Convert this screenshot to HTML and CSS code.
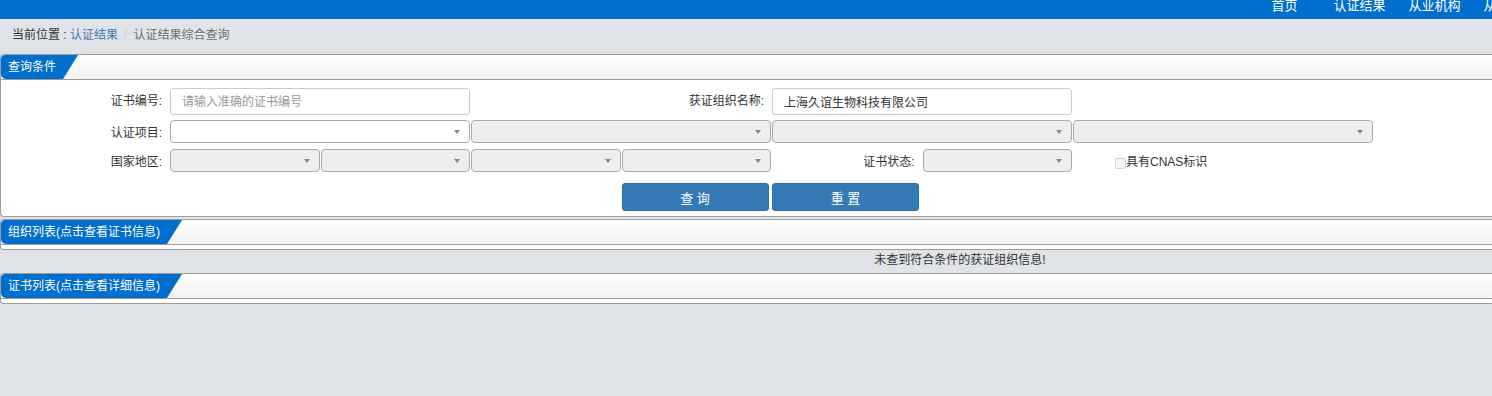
FILE: index.html
```html
<!DOCTYPE html>
<html lang="zh-CN">
<head>
    <meta charset="UTF-8">
    <title>认证结果综合查询</title>
    <link rel="stylesheet" href="styles.css">
</head>
<body>
<div id="page">
    <div id="topbar">
        <ul class="nav">
            <li>首页</li>
            <li>认证结果</li>
            <li>从业机构</li>
            <li>从业人员</li>
        </ul>
    </div>
    <div class="crumb">
        当前位置 : <a class="crumb-link">认证结果</a><span class="sep">/</span><span class="crumb-cur">认证结果综合查询</span>
    </div>

    <!--查询条件-->
    <div class="panel">
        <div class="panel-head"><span class="tab">查询条件</span></div>
        <div class="panel-body query">
            <label class="lbl r1">证书编号:</label>
            <div class="c2-3 r1"><input class="txt" type="text" placeholder="请输入准确的证书编号"></div>
            <label class="lbl r1 c4-5">获证组织名称:</label>
            <div class="c6-7 r1"><input class="txt" type="text" value="上海久谊生物科技有限公司"></div>

            <label class="lbl r2">认证项目:</label>
            <div class="c2-3 r2"><span class="sel white"><select></select></span></div>
            <div class="c4-5 r2"><span class="sel"><select disabled></select></span></div>
            <div class="c6-7 r2"><span class="sel"><select disabled></select></span></div>
            <div class="c8-9 r2"><span class="sel"><select disabled></select></span></div>

            <label class="lbl r3">国家地区:</label>
            <div class="r3"><span class="sel"><select disabled></select></span></div>
            <div class="r3"><span class="sel"><select disabled></select></span></div>
            <div class="r3"><span class="sel"><select disabled></select></span></div>
            <div class="r3"><span class="sel"><select disabled></select></span></div>
            <label class="lbl r3">证书状态:</label>
            <div class="r3"><span class="sel"><select disabled></select></span></div>
            <div class="r3 cnas"><input type="checkbox" class="chk" disabled>具有CNAS标识</div>

            <div class="r4 btn-query"><button class="btn">查 询</button></div>
            <div class="r4 btn-reset"><button class="btn">重 置</button></div>
        </div>
    </div>

    <!--组织列表-->
    <div class="panel">
        <div class="panel-head"><span class="tab">组织列表(点击查看证书信息)</span></div>
        <div class="panel-body empty"></div>
    </div>
    <div class="msg">未查到符合条件的获证组织信息!</div>

    <!--证书列表-->
    <div class="panel">
        <div class="panel-head"><span class="tab">证书列表(点击查看详细信息)</span></div>
        <div class="panel-body empty"></div>
    </div>
</div>
</body>
</html>
```

FILE: styles.css
```css
html, body
{
    margin: 0px;
    overflow: hidden;
}
body{
    background-color: #e0e4e8;
    font-family: "Liberation Sans", "Noto Sans CJK SC", sans-serif;
    font-size: 12px;
    color: #333;
}
#page{
    width: 1920px;
}
#topbar{
    height: 19px;
    background-color: #006ecc;
    padding-left: 1247px;
}
.nav{
    margin: 0;
    padding: 0;
    list-style: none;
    display: flex;
    white-space: nowrap;
}
.nav li{
    width: 75px;
    text-align: center;
    color: #fff;
    font-size: 13px;
    line-height: 11px;
}
.crumb{
    height: 35px;
    box-sizing: border-box;
    padding: 6px 0 0 12px;
    line-height: 20px;
}
.crumb-link{
    color: #4679ad;
}
.sep{
    color: #c8c8c8;
    padding: 0 6px;
}
.crumb-cur{
    color: #707070;
}

/* panels */
.panel{
    border: 1px solid #9c9c9c;
    border-right: none;
    border-radius: 4px 0 0 4px;
    margin-bottom: 2px;
    background-color: #fff;
    overflow: hidden;
}
.panel-head{
    height: 24px;
    border-bottom: 1px solid #9c9c9c;
    background: linear-gradient(to bottom, #fefefe, #f2f2f2);
}
.tab{
    display: inline-block;
    height: 24px;
    line-height: 24px;
    padding: 0 22px 0 7px;
    background-color: #006ecc;
    color: #fff;
    border-radius: 4px 0 0 5px;
    clip-path: polygon(0 0, 100% 0, calc(100% - 15px) 100%, 0 100%);
}
.empty{
    height: 4px;
}
.msg{
    height: 21px;
    line-height: 16px;
    text-align: center;
}

/* query form */
.query{
    display: grid;
    grid-template-columns: 169px repeat(8, 150.5px);
    grid-template-rows: 32px 29px 34px 28px;
    align-items: start;
    padding: 8px 0 5px 0;
}
.lbl{
    text-align: right;
    padding-right: 8px;
    line-height: 27px;
}
.r1{ grid-row: 1; }
.r2{ grid-row: 2; }
.r3{ grid-row: 3; }
.r4{ grid-row: 4; }
.c2-3{ grid-column: 2 / span 2; }
.c4-5{ grid-column: 4 / span 2; }
.c6-7{ grid-column: 6 / span 2; }
.c8-9{ grid-column: 8 / span 2; }
.txt{
    display: block;
    box-sizing: border-box;
    width: calc(100% - 1px);
    height: 27px;
    border: 1px solid #ccc;
    border-radius: 3px;
    padding: 0 11px;
    font-family: inherit;
    font-size: 12px;
    color: #333;
    outline: none;
}
.txt::placeholder{
    color: #999;
}
.sel{
    display: block;
    position: relative;
    box-sizing: border-box;
    width: calc(100% - 1px);
    height: 23px;
    border: 1px solid #aaa;
    border-radius: 4px;
    background-color: #eee;
}
.sel.white{
    background-color: #fff;
}
.sel select{
    appearance: none;
    -webkit-appearance: none;
    display: block;
    width: 100%;
    height: 100%;
    border: none;
    background: transparent;
    outline: none;
}
.sel::after{
    content: "";
    position: absolute;
    right: 9px;
    top: 9px;
    border-left: 3px solid transparent;
    border-right: 3px solid transparent;
    border-top: 4px solid #888;
}
.cnas{
    grid-column: 8 / span 2;
    padding-left: 42px;
    line-height: 27px;
    display: flex;
    align-items: center;
}
.chk{
    appearance: none;
    -webkit-appearance: none;
    width: 11px;
    height: 11px;
    margin: 1px 0 0 0;
    border: 1px solid #d4d4d4;
    border-radius: 2px;
    background-color: #f6f6f6;
}
.btn-query{
    grid-column: 5;
}
.btn-reset{
    grid-column: 6;
}
.btn{
    display: block;
    width: 147px;
    height: 28px;
    border: 1px solid #2e6da4;
    border-radius: 3px;
    background-color: #337ab7;
    color: #fff;
    font-family: inherit;
    font-size: 13px;
}
```
